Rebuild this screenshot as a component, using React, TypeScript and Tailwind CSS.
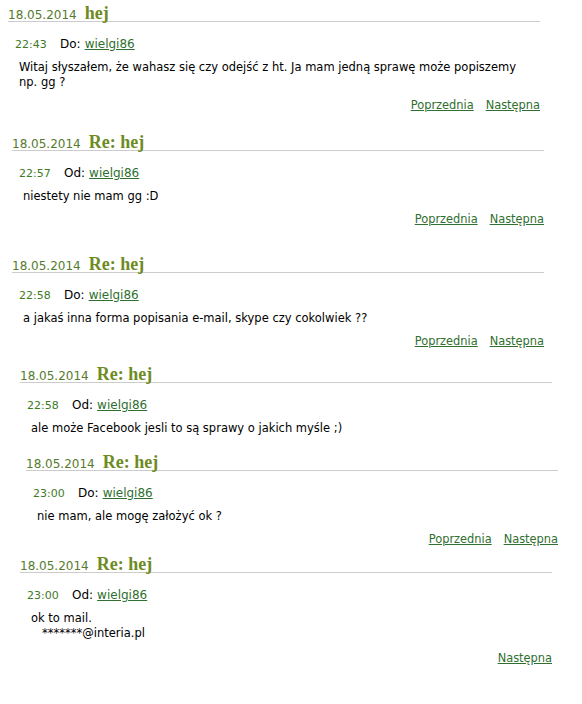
import React from "react";

type Msg = {
  ml: number;
  mt: number;
  title: string;
  time: string;
  dir: string;
  body: React.ReactNode;
  prev: boolean;
  next: boolean;
  lt: number;
};

const msgs: Msg[] = [
  { ml: 8, mt: 5, lt: 8, title: "hej", time: "22:43", dir: "Do:", body: <>Witaj słyszałem, że wahasz się czy odejść z ht. Ja mam jedną sprawę może popiszemy np. gg ?</>, prev: true, next: true },
  { ml: 12, mt: 21, lt: 8, title: "Re: hej", time: "22:57", dir: "Od:", body: <>niestety nie mam gg :D</>, prev: true, next: true },
  { ml: 12, mt: 29, lt: 8, title: "Re: hej", time: "22:58", dir: "Do:", body: <>a jakaś inna forma popisania e-mail, skype czy cokolwiek ??</>, prev: true, next: true },
  { ml: 20, mt: 17, lt: 8, title: "Re: hej", time: "22:58", dir: "Od:", body: <>ale może Facebook jesli to są sprawy o jakich myśle ;)</>, prev: false, next: false },
  { ml: 26, mt: 18, lt: 8, title: "Re: hej", time: "23:00", dir: "Do:", body: <>nie mam, ale mogę założyć ok ?</>, prev: true, next: true },
  { ml: 20, mt: 9, lt: 10, title: "Re: hej", time: "23:00", dir: "Od:", body: <>ok to mail.<br />&nbsp;&nbsp;&nbsp;*******@interia.pl</>, prev: false, next: true },
];

const font = { fontFamily: "'DejaVu Sans', Verdana, sans-serif" };

export default function App() {
  return (
    <div className="w-[582px] h-[704px] bg-white text-black" style={font}>
      {msgs.map((m, i) => (
        <div key={i} style={{ marginLeft: m.ml, paddingTop: m.mt }}>
          <div className="w-[532px] border-b border-[#cccccc] flex items-baseline h-[17px] leading-[17px]">
            <span className="text-[12px] text-[#557b2e]">18.05.2014</span>
            <span className="ml-[8px] text-[18px] font-bold text-[#6e8b1f]" style={{ fontFamily: "'Liberation Serif', 'Times New Roman', serif" }}>{m.title}</span>
          </div>
          <div className="mt-[15px] ml-[7px] leading-[14px] flex items-baseline">
            <span className="text-[11px] text-[#3f7a1f] w-[45px]">{m.time}</span>
            <span className="text-[12px]">{m.dir}</span>
            <a href="#" className="ml-[4px] text-[12px] text-[#2f6f2f] underline">wielgi86</a>
          </div>
          <div className="mt-[8px] ml-[11px] w-[505px] text-[11.5px] leading-[15px]">{m.body}</div>
          {(m.prev || m.next) && (
            <div className="w-[532px] flex justify-end gap-[12px] text-[11.4px] leading-[15px]" style={{ marginTop: m.lt }}>
              {m.prev && <a href="#" className="text-[#2f6f2f] underline">Poprzednia</a>}
              {m.next && <a href="#" className="text-[#2f6f2f] underline">Następna</a>}
            </div>
          )}
        </div>
      ))}
    </div>
  );
}
